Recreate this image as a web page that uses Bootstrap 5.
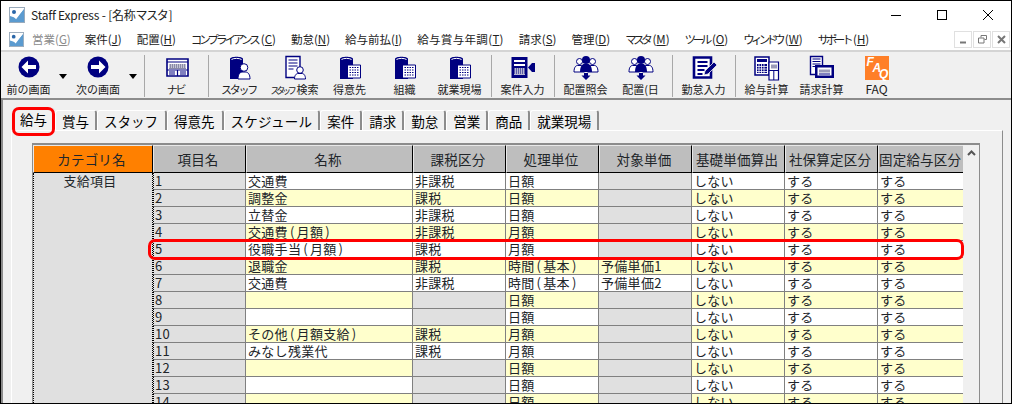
<!DOCTYPE html>
<html lang="ja">
<head>
    <meta charset="utf-8">
    <title>Staff Express - [名称マスタ]</title>
    <link href="https://cdn.jsdelivr.net/npm/bootstrap@5.3.0/dist/css/bootstrap.min.css" rel="stylesheet">
    <style>
        html, body { background: #fff; overflow: hidden; }
        body { margin: 0; font-family: "Noto Sans CJK JP", "Liberation Sans", sans-serif; color: #000; }
        .app-window { position: relative; width: 1012px; height: 404px; border: 1px solid #000; background: #fff; overflow: hidden; }

        /* title bar and menu */
        .title-bar { height: 28px; font-size: 12px; padding-left: 8px; }
        .title-text { margin-left: 6px; letter-spacing: -.2px; color: #222; }
        .title-kana { letter-spacing: -1.4px; padding-right: 1px; }
        .win-btn { width: 46px; height: 28px; }
        .menu-row { height: 21px; font-size: 11.5px; padding-left: 8px; }
        .menu-items { gap: 15px; margin-left: 8px; color: #222; white-space: nowrap; }
        .menu-off { color: #8a8a8a; margin-right: -1px; }
        .menu-wide { letter-spacing: .33px; }
        .kana-tight { letter-spacing: -3px; padding-right: 3px; }
        .kana-tighter { letter-spacing: -3.8px; padding-right: 3px; }
        .kana-narrow { letter-spacing: -3.4px; padding-right: 3px; }
        .mdi-group { gap: 1px; margin-right: 1px; }
        .mdi-btn { width: 18px; height: 17px; border: 1px solid #e0e0e0; }

        /* toolbar */
        .tool-bar { height: 50px; background: #f0f0f0; border-top: 2px solid #d4d4d4; border-bottom: 2px solid #8c8c8c; }
        .tool-item { width: 55px; font-size: 11px; line-height: 14px; padding-top: 3px; color: #222; white-space: nowrap; }
        .tool-item svg { display: block; width: 26px; height: 26px; margin-bottom: 1px; }
        .tool-next { width: 56px; }
        .tool-drop { width: 14px; padding-top: 22px; }
        .tool-drop i { display: block; width: 0; height: 0; margin-left: 3px; border: 4px solid transparent; border-top: 5px solid #000; border-bottom: 0; }
        .tool-sep { width: 1px; height: 42px; margin: 3px 3.5px 0; background: #a8a8a8; }
        .tool-sep-wide { margin-left: 4px; margin-right: 4px; }
        .tool-kana { letter-spacing: -2.2px; padding-right: 2px; }
        .small-kana { font-size: 9px; letter-spacing: -3.2px; padding-right: 3px; }
        .tool-faq { font-size: 12px; }

        /* work area */
        .work-area { height: 303px; background: #f0f0f0; border-left: 2px solid #8c8c8c; }
        .tab-strip { padding: 10px 0 0 10px; height: 30px; }
        .tab-strip .nav-tabs { border: 0; flex-wrap: nowrap; }
        .tab-strip .nav-link { height: 20px; padding: 0 6px; margin: 0; font-size: 13.5px; line-height: 20px; color: #000; background: #f0f0f0;
            border: 0; border-top: 1px solid #fff; border-left: 1px solid #fff; border-right: 2px solid #8c8c8c; border-radius: 3px 3px 0 0; white-space: nowrap; }
        .tab-strip .nav-link.active { margin: -2px 0 0 0; height: 22px; padding: 0 8px 0 6px; color: #000; background: #f0f0f0; border-right-width: 0; }
        .tab-wide { letter-spacing: .3px; }
        .tab-roomy { padding-right: 7px !important; }
        .tab-pane-box { height: 273px; margin: 0 8px; border-top: 1px solid #fff; border-left: 1px solid #fff; border-right: 1px solid #8c8c8c; padding: 12px 0 0 20px; overflow: hidden; }

        /* grid */
        .grid-frame { width: 948px; height: 260px; border-top: 2px solid #8c8c8c; border-left: 1px solid #8c8c8c; border-right: 1px solid #8c8c8c; overflow: hidden; }
        .table.master-grid { width: 930px; margin: 0; table-layout: fixed; border-collapse: separate; border-spacing: 0; font-size: 13px; line-height: 16px; }
        .table.master-grid > thead > tr > th { height: 28px; padding: 0 3px 0 0; font-weight: 400; font-size: 13.5px; letter-spacing: .2px; text-align: center; vertical-align: middle; white-space: nowrap;
            --bs-table-bg: #bebebe; border: 0; border-right: 1px solid #000; border-bottom: 1px solid #000; border-top: 1px solid #e8e8e8; border-left: 1px solid #e8e8e8; }
        .table.master-grid > thead > tr > th.head-cat { --bs-table-bg: #ff8000; }
        .table.master-grid > thead > tr > th.head-last { border-right: 0; text-align: left; }
        .table.master-grid > tbody > tr > td { height: 17px; padding: 0 2px; border: 0; border-right: 1px solid #808080; border-bottom: 1px solid #808080; white-space: nowrap; vertical-align: top; letter-spacing: .3px; }
        .table.master-grid > tbody > tr > td.cell-cat { padding: 0 6px 0 0; text-align: center; --bs-table-bg: #e0e0e0; border-left: 1px dotted #000; border-right: 1px dotted #000; }
        .table.master-grid > tbody > tr > td.cell-num { --bs-table-bg: #e0e0e0; border-left: 1px dotted #000; padding-left: 1px; }
        .table.master-grid > tbody > tr > td:last-child { border-right: 0; }
        .table.master-grid > tbody > tr > td.cell-gray { --bs-table-bg: #e0e0e0; }
        .table.master-grid > tbody > tr > td.cell-yellow { --bs-table-bg: #ffffcc; }
        .table.master-grid > tbody > tr > td.cell-white { --bs-table-bg: #fff; }
        .paren-gap { padding: 0 2px; }
        .scroll-rail { width: 16px; background: #f0f0f0; }
        .scroll-up { height: 17px; background: #f0f0f0; }

        /* red call-outs over the screen */
        .mark-tab { position: absolute; left: 11px; top: 106px; width: 43px; height: 29px; border: 3px solid #f00; border-radius: 7px; }
        .mark-row { position: absolute; left: 147px; top: 238px; width: 816px; height: 21px; border: 3px solid #f00; border-radius: 7px; }
    </style>
</head>
<body>
<!-- toolbar icon set -->
<svg width="0" height="0" class="d-none">
    <symbol id="ic-app" viewBox="0 0 16 16">
        <rect x=".5" y=".5" width="15" height="15" fill="#fff" stroke="#9ab"/>
        <path d="M1 15V9l6 2 8-9v13z" fill="#5b9bd0"/>
        <circle cx="5" cy="5" r="2" fill="#2a66a8"/>
        <path d="M4 8l3 3 6-8" fill="none" stroke="#fff" stroke-width="1.5"/>
    </symbol>
    <symbol id="ic-back" viewBox="0 0 26 26">
        <circle cx="13" cy="12" r="10.5" fill="#000080"/>
        <path d="M12 5.5L5.5 12l6.500 6.500v-4.500h8v-4h-8z" fill="#fff"/>
    </symbol>
    <symbol id="ic-next" viewBox="0 0 26 26">
        <circle cx="13" cy="12" r="10.500" fill="#000080"/>
        <path d="M14 5.500l6.500 6.500-6.500 6.500v-4.500h-8v-4h8z" fill="#fff"/>
    </symbol>
    <symbol id="ic-navi" viewBox="0 0 26 26">
        <path d="M3 4h21v17H3z" fill="#fff" stroke="#000080" stroke-width="1.600"/>
        <path d="M3 7h21M3 15h21M13.500 15v6" stroke="#000080" stroke-width="1.200" fill="none"/>
        <path d="M5 9h17v5H5z" fill="#8a8aa8"/>
        <path d="M5 10h17M5 12h17" stroke="#fff" stroke-dasharray="1 1"/>
        <path d="M5 17h6M5 19h6M16 17h6M16 19h6" stroke="#000080"/>
    </symbol>
    <symbol id="ic-person" viewBox="0 0 26 26">
        <path d="M3 4c0-3 13-3 13 0v20H3z" fill="#000080"/>
        <path d="M4.500 4.500c2-1.500 8-1.500 10 0" stroke="#fff" fill="none"/>
        <circle cx="17" cy="12.500" r="3.800" fill="#fff" stroke="#000080"/>
        <path d="M11 24c0-5 2-6.500 4-7h4c2 .5 4 2 4 7z" fill="#fff" stroke="#000080"/>
    </symbol>
    <symbol id="ic-search" viewBox="0 0 26 26">
        <path d="M4 1.500h14v21H4z" fill="#fff" stroke="#000080" stroke-width="1.400"/>
        <path d="M6.500 5h9M6.500 8h9M6.500 11h9M6.500 14h5" stroke="#000080"/>
        <circle cx="18" cy="15" r="3.300" fill="#fff" stroke="#000080"/>
        <path d="M12.500 24c0-4 2-5.500 3.500-5.500h4c1.500 0 3.500 1.500 3.500 5.500z" fill="#fff" stroke="#000080"/>
    </symbol>
    <symbol id="ic-build" viewBox="0 0 26 26">
        <path d="M3 4c0-3 13-3 13 0v20H3z" fill="#000080"/>
        <path d="M4.500 4.500c2-1.500 8-1.500 10 0" stroke="#fff" fill="none"/>
        <path d="M10.500 10h13v13h-13z" fill="#fff" stroke="#000080"/>
        <path d="M12.500 12.500h9M12.500 15h9M12.500 17.500h9M12.500 20h9" stroke="#000080" stroke-dasharray="1.500 1"/>
    </symbol>
    <symbol id="ic-case" viewBox="0 0 26 26">
        <path d="M1.500 2h16v21h-16z" fill="#000080"/>
        <path d="M4 5h11v2H4zM4 9h11v2H4z" fill="#fff"/>
        <path d="M4 13h11v7H4z" fill="#b8b8d0"/>
        <path d="M4 14h11M4 16h11M4 18h11" stroke="#000080" stroke-dasharray="1 1"/>
        <path d="M25 8v9h-3l-4-4.500 4-4.500z" fill="#000080"/>
    </symbol>
    <symbol id="ic-group" viewBox="0 0 26 26">
        <circle cx="6.500" cy="6.500" r="3" fill="#fff" stroke="#000080"/>
        <circle cx="19.500" cy="6.500" r="3" fill="#fff" stroke="#000080"/>
        <path d="M1 17c0-5 2-6.500 3.500-6.500h4c1.500 0 3 1.500 3 6.500zM14.500 17c0-5 1.500-6.500 3-6.500h4c1.500 0 3.500 1.500 3.500 6.500z" fill="#fff" stroke="#000080"/>
        <circle cx="13" cy="5" r="4" fill="#000080"/>
        <path d="M7 17c0-6 2.500-8 4-8h4c1.500 0 4 2 4 8z" fill="#000080"/>
        <path d="M11 18h4v2.500h2.500L13 25l-4.500-4.500H11z" fill="#000080"/>
    </symbol>
    <symbol id="ic-edit" viewBox="0 0 26 26">
        <path d="M3 2.500h17v20H3z" fill="#fff" stroke="#000080" stroke-width="2.600"/>
        <path d="M6.500 7h10M6.500 11h10M6.500 15h7M6.500 19h5" stroke="#000080" stroke-width="1.800"/>
        <path d="M13 20l1-4L23 7l3 3-9 9z" fill="#000080" stroke="#f0f0f0" stroke-width=".8"/>
    </symbol>
    <symbol id="ic-calc" viewBox="0 0 26 26">
        <path d="M1 2h14v18H1z" fill="#fff" stroke="#000080" stroke-width="1.500"/>
        <path d="M3 4h10v3H3z" fill="#000080"/>
        <path d="M3 9h10v9H3z" fill="#000080"/>
        <path d="M5 9v9M7.500 9v9M10 9v9M3 11.500h10M3 14h10M3 16.500h10" stroke="#fff" stroke-width=".8"/>
        <path d="M15 7h9.500v18H15z" fill="#fff" stroke="#000080" stroke-width="1.200"/>
        <path d="M17 9.500h6v4h-6z" fill="#9a9ab8"/>
        <path d="M15 15.500h9.500M19.800 16v9" stroke="#000080"/>
    </symbol>
    <symbol id="ic-bill" viewBox="0 0 26 26">
        <path d="M1.500 1.500h12v18h-12z" fill="#fff" stroke="#000080" stroke-width="1.400"/>
        <path d="M3.500 4h8M3.500 6.500h8M3.500 9h8M3.500 11.500h3" stroke="#000080"/>
        <path d="M6 10h19v13H6z" fill="#000080"/>
        <path d="M8.500 12.500h14v8h-14z" fill="#fff"/>
        <path d="M10 14.500h11v3H10z" fill="#9a9ab8"/>
        <path d="M10 19h11" stroke="#000080"/>
    </symbol>
    <symbol id="ic-faq" viewBox="0 0 26 26">
        <rect x="1" y="1" width="24" height="24" fill="#ff7f27"/>
        <text x="2.500" y="11" font-family="Liberation Sans, sans-serif" font-size="12" font-weight="700" font-style="italic" fill="#fff">F</text>
        <text x="8.500" y="17" font-family="Liberation Sans, sans-serif" font-size="12" font-weight="700" font-style="italic" fill="#fff">A</text>
        <text x="15" y="23" font-family="Liberation Sans, sans-serif" font-size="12" font-weight="700" font-style="italic" fill="#fff">Q</text>
    </symbol>
</svg>

<div class="app-window d-flex flex-column">
    <div class="title-bar d-flex align-items-center">
        <svg width="16" height="16"><use href="#ic-app"/></svg>
        <span class="title-text">Staff Express - [名称<span class="title-kana">マスタ</span>]</span>
        <div class="ms-auto d-flex">
            <div class="win-btn d-flex align-items-center justify-content-center">
                <svg width="10" height="10"><path d="M0 5.500h10" stroke="#000"/></svg>
            </div>
            <div class="win-btn d-flex align-items-center justify-content-center">
                <svg width="10" height="10"><rect x=".5" y=".5" width="9" height="9" fill="none" stroke="#000"/></svg>
            </div>
            <div class="win-btn d-flex align-items-center justify-content-center">
                <svg width="10" height="10"><path d="M0 0l10 10M10 0L0 10" stroke="#000"/></svg>
            </div>
        </div>
    </div>

    <div class="menu-row d-flex align-items-center">
        <svg width="15" height="15"><use href="#ic-app"/></svg>
        <div class="menu-items d-flex">
            <span class="menu-off">営業(<u>G</u>)</span>
            <span>案件(<u>J</u>)</span>
            <span>配置(<u>H</u>)</span>
            <span><span class="kana-tight">コンプライアンス</span>(<u>C</u>)</span>
            <span>勤怠(<u>N</u>)</span>
            <span>給与前払(<u>I</u>)</span>
            <span class="menu-wide">給与賞与年調(<u>T</u>)</span>
            <span>請求(<u>S</u>)</span>
            <span>管理(<u>D</u>)</span>
            <span><span class="kana-narrow">マスタ</span>(<u>M</u>)</span>
            <span><span class="kana-narrow">ツール</span>(<u>O</u>)</span>
            <span><span class="kana-tighter">ウィンドウ</span>(<u>W</u>)</span>
            <span><span class="kana-narrow">サポート</span>(<u>H</u>)</span>
        </div>
        <div class="mdi-group ms-auto d-flex">
            <div class="mdi-btn d-flex align-items-center justify-content-center">
                <svg width="9" height="9"><path d="M1 7.500h6" stroke="#777" stroke-width="2"/></svg>
            </div>
            <div class="mdi-btn d-flex align-items-center justify-content-center">
                <svg width="9" height="9"><path d="M3 2.500V.5h5.500v4H6.500M.5 3h5.500v5H.5z" fill="none" stroke="#777"/></svg>
            </div>
            <div class="mdi-btn d-flex align-items-center justify-content-center">
                <svg width="9" height="9"><path d="M1 1l7 7M8 1L1 8" stroke="#777" stroke-width="2"/></svg>
            </div>
        </div>
    </div>

    <div class="tool-bar d-flex">
        <div class="tool-item d-flex flex-column align-items-center"><svg><use href="#ic-back"/></svg>前の画面</div>
        <div class="tool-drop"><i></i></div>
        <div class="tool-item tool-next d-flex flex-column align-items-center"><svg><use href="#ic-next"/></svg>次の画面</div>
        <div class="tool-drop"><i></i></div>
        <div class="tool-sep tool-sep-wide"></div>
        <div class="tool-item d-flex flex-column align-items-center"><svg><use href="#ic-navi"/></svg><span class="tool-kana">ナビ</span></div>
        <div class="tool-sep"></div>
        <div class="tool-item d-flex flex-column align-items-center"><svg><use href="#ic-person"/></svg><span class="tool-kana">スタッフ</span></div>
        <div class="tool-item d-flex flex-column align-items-center"><svg><use href="#ic-search"/></svg><span><span class="small-kana">スタッフ</span>検索</span></div>
        <div class="tool-item d-flex flex-column align-items-center"><svg><use href="#ic-build"/></svg>得意先</div>
        <div class="tool-item d-flex flex-column align-items-center"><svg><use href="#ic-build"/></svg>組織</div>
        <div class="tool-item d-flex flex-column align-items-center"><svg><use href="#ic-build"/></svg>就業現場</div>
        <div class="tool-sep"></div>
        <div class="tool-item d-flex flex-column align-items-center"><svg><use href="#ic-case"/></svg>案件入力</div>
        <div class="tool-sep"></div>
        <div class="tool-item d-flex flex-column align-items-center"><svg><use href="#ic-group"/></svg>配置照会</div>
        <div class="tool-item d-flex flex-column align-items-center"><svg><use href="#ic-group"/></svg>配置(日</div>
        <div class="tool-sep"></div>
        <div class="tool-item d-flex flex-column align-items-center"><svg><use href="#ic-edit"/></svg>勤怠入力</div>
        <div class="tool-sep"></div>
        <div class="tool-item d-flex flex-column align-items-center"><svg><use href="#ic-calc"/></svg>給与計算</div>
        <div class="tool-item d-flex flex-column align-items-center"><svg><use href="#ic-bill"/></svg>請求計算</div>
        <div class="tool-item tool-faq d-flex flex-column align-items-center"><svg><use href="#ic-faq"/></svg>FAQ</div>
    </div>

    <div class="work-area">
        <div class="tab-strip">
            <ul class="nav nav-tabs">
                <li class="nav-item"><a class="nav-link active" href="#">給与</a></li>
                <li class="nav-item"><a class="nav-link" href="#">賞与</a></li>
                <li class="nav-item"><a class="nav-link tab-roomy" href="#">スタッフ</a></li>
                <li class="nav-item"><a class="nav-link tab-roomy" href="#">得意先</a></li>
                <li class="nav-item"><a class="nav-link tab-wide" href="#">スケジュール</a></li>
                <li class="nav-item"><a class="nav-link" href="#">案件</a></li>
                <li class="nav-item"><a class="nav-link" href="#">請求</a></li>
                <li class="nav-item"><a class="nav-link" href="#">勤怠</a></li>
                <li class="nav-item"><a class="nav-link" href="#">営業</a></li>
                <li class="nav-item"><a class="nav-link" href="#">商品</a></li>
                <li class="nav-item"><a class="nav-link" href="#">就業現場</a></li>
            </ul>
        </div>
        <div class="tab-pane-box">
            <div class="grid-frame d-flex">
                <table class="table master-grid">
                    <colgroup>
                        <col style="width:120px"><col style="width:93px"><col style="width:167px"><col style="width:93px"><col style="width:93px"><col style="width:93px"><col style="width:93px"><col style="width:93px"><col style="width:85px">
                    </colgroup>
                    <thead>
                    <tr>
                        <th class="head-cat">カテゴリ名</th>
                        <th>項目名</th>
                        <th>名称</th>
                        <th>課税区分</th>
                        <th>処理単位</th>
                        <th>対象単価</th>
                        <th>基礎単価算出</th>
                        <th>社保算定区分</th>
                        <th class="head-last">固定給与区分</th>
                    </tr>
                    </thead>
                    <tbody id="masterRows"></tbody>
                </table>
                <div class="scroll-rail">
                    <div class="scroll-up d-flex align-items-center justify-content-center">
                        <svg width="9" height="7"><path d="M1 5l3.500-3.500L8 5" fill="none" stroke="#555" stroke-width="2"/></svg>
                    </div>
                </div>
            </div>
        </div>
    </div>

    <div class="mark-tab"></div>
    <div class="mark-row"></div>
</div>

<script>
    // [name, tax, unit, target]
    const rows = [
        ['交通費', '非課税', '日額', ''],
        ['調整金', '課税', '日額', ''],
        ['立替金', '非課税', '日額', ''],
        ['交通費(月額)', '非課税', '月額', ''],
        ['役職手当(月額)', '課税', '月額', ''],
        ['退職金', '課税', '時間(基本)', '予備単価1'],
        ['交通費', '非課税', '時間(基本)', '予備単価2'],
        ['', '', '日額', ''],
        ['', '', '日額', ''],
        ['その他(月額支給)', '課税', '月額', ''],
        ['みなし残業代', '課税', '月額', ''],
        ['', '', '日額', ''],
        ['', '', '日額', ''],
        ['', '', '日額', '']
    ];

    // the grid font draws parentheses wider than ours
    function withParens(text) {
        return text.replace(/[()]/g, m => `<span class="paren-gap">${m}</span>`);
    }

    document.getElementById('masterRows').innerHTML = rows.map((row, index) => {
        const tint = index % 2 === 0 ? 'cell-white' : 'cell-yellow';
        const category = index === 0 ? `<td class="cell-cat" rowspan="${rows.length}">支給項目</td>` : '';
        return `
            <tr>
                ${category}
                <td class="cell-num">${index + 1}</td>
                <td class="${tint}">${withParens(row[0])}</td>
                <td class="${row[1] ? tint : 'cell-gray'}">${row[1]}</td>
                <td class="${tint}">${withParens(row[2])}</td>
                <td class="${row[3] ? tint : 'cell-gray'}">${row[3]}</td>
                <td class="${tint}">しない</td>
                <td class="${tint}">する</td>
                <td class="${tint}">する</td>
            </tr>
        `;
    }).join('');
</script>
<script src="https://cdn.jsdelivr.net/npm/bootstrap@5.3.0/dist/js/bootstrap.bundle.min.js"></script>
</body>
</html>
